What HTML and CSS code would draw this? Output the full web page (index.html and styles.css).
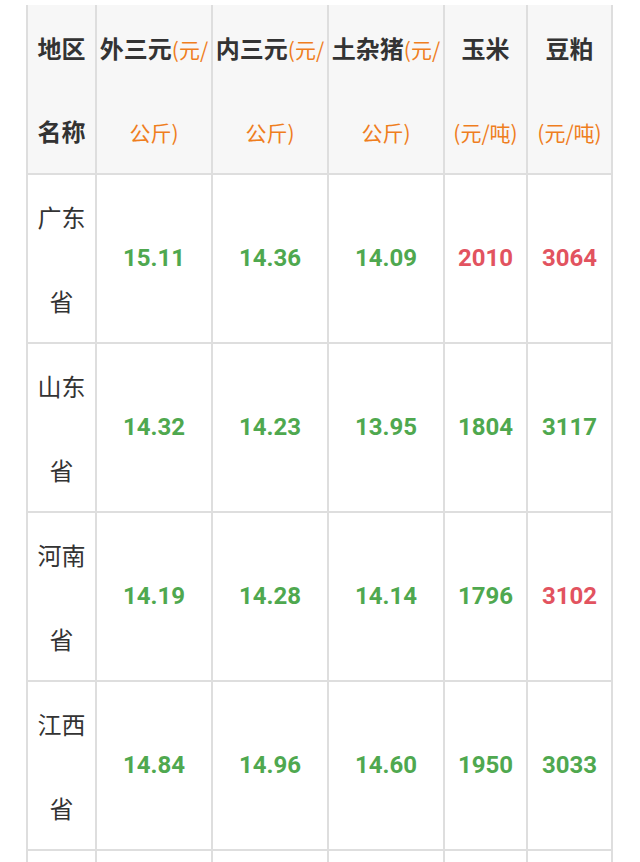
FILE: index.html
```html
<!DOCTYPE html>
<html lang="zh-CN">
<head>
<meta charset="utf-8">
<title>价格表</title>
<link rel="stylesheet" href="styles.css">
</head>
<body>
<table class="price-table">
  <colgroup>
    <col class="c-name">
    <col class="c-pig">
    <col class="c-pig">
    <col class="c-pig">
    <col class="c-corn">
    <col class="c-soy">
  </colgroup>
  <thead>
    <tr>
      <th>地区<br>名称</th>
      <th>外三元<span class="unit">(元/<br>公斤)</span></th>
      <th>内三元<span class="unit">(元/<br>公斤)</span></th>
      <th>土杂猪<span class="unit">(元/<br>公斤)</span></th>
      <th>玉米<br><span class="unit">(元/吨)</span></th>
      <th>豆粕<br><span class="unit">(元/吨)</span></th>
    </tr>
  </thead>
  <tbody>
    <tr>
      <td class="region">广东<br>省</td>
      <td class="up">15.11</td>
      <td class="up">14.36</td>
      <td class="up">14.09</td>
      <td class="down">2010</td>
      <td class="down">3064</td>
    </tr>
    <tr>
      <td class="region">山东<br>省</td>
      <td class="up">14.32</td>
      <td class="up">14.23</td>
      <td class="up">13.95</td>
      <td class="up">1804</td>
      <td class="up">3117</td>
    </tr>
    <tr>
      <td class="region">河南<br>省</td>
      <td class="up">14.19</td>
      <td class="up">14.28</td>
      <td class="up">14.14</td>
      <td class="up">1796</td>
      <td class="down">3102</td>
    </tr>
    <tr>
      <td class="region">江西<br>省</td>
      <td class="up">14.84</td>
      <td class="up">14.96</td>
      <td class="up">14.60</td>
      <td class="up">1950</td>
      <td class="up">3033</td>
    </tr>
    <tr>
      <td class="region">&nbsp;<br>&nbsp;</td>
      <td></td>
      <td></td>
      <td></td>
      <td></td>
      <td></td>
    </tr>
  </tbody>
</table>
</body>
</html>
```

FILE: styles.css
```css
html, body {
  margin: 0;
  padding: 0;
  background: #ffffff;
}

body {
  overflow: hidden;
  height: 862px;
}

.price-table {
  margin: 5px 0 0 26px;
  border-collapse: collapse;
  table-layout: fixed;
  width: 587px;
  font-family: Roboto, "Noto Sans CJK SC", sans-serif;
  font-size: 24px;
  color: #333333;
}

.c-name { width: 69px; }
.c-pig { width: 116px; }
.c-corn { width: 83px; }
.c-soy { width: 85px; }

.price-table th,
.price-table td {
  border: 2px solid #dedede;
  padding: 0 1px;
  text-align: center;
  vertical-align: middle;
  line-height: 83.5px;
  white-space: nowrap;
}

.price-table thead th {
  border-top: none;
  background: #f7f7f7;
  font-family: "Noto Sans CJK SC", sans-serif;
  font-weight: 700;
  color: #333333;
  height: 168px;
}

.unit {
  font-family: "Noto Sans CJK SC", sans-serif;
  font-weight: 400;
  font-size: 21px;
  line-height: 1;
  color: #ef7e1e;
}

.price-table td {
  height: 167px;
}

.region {
  font-family: "Noto Sans CJK SC", sans-serif;
  font-weight: 400;
  color: #333333;
}

.up {
  font-family: Roboto, sans-serif;
  font-weight: 700;
  color: #4fa84f;
}

.down {
  font-family: Roboto, sans-serif;
  font-weight: 700;
  color: #e2535f;
}
```
